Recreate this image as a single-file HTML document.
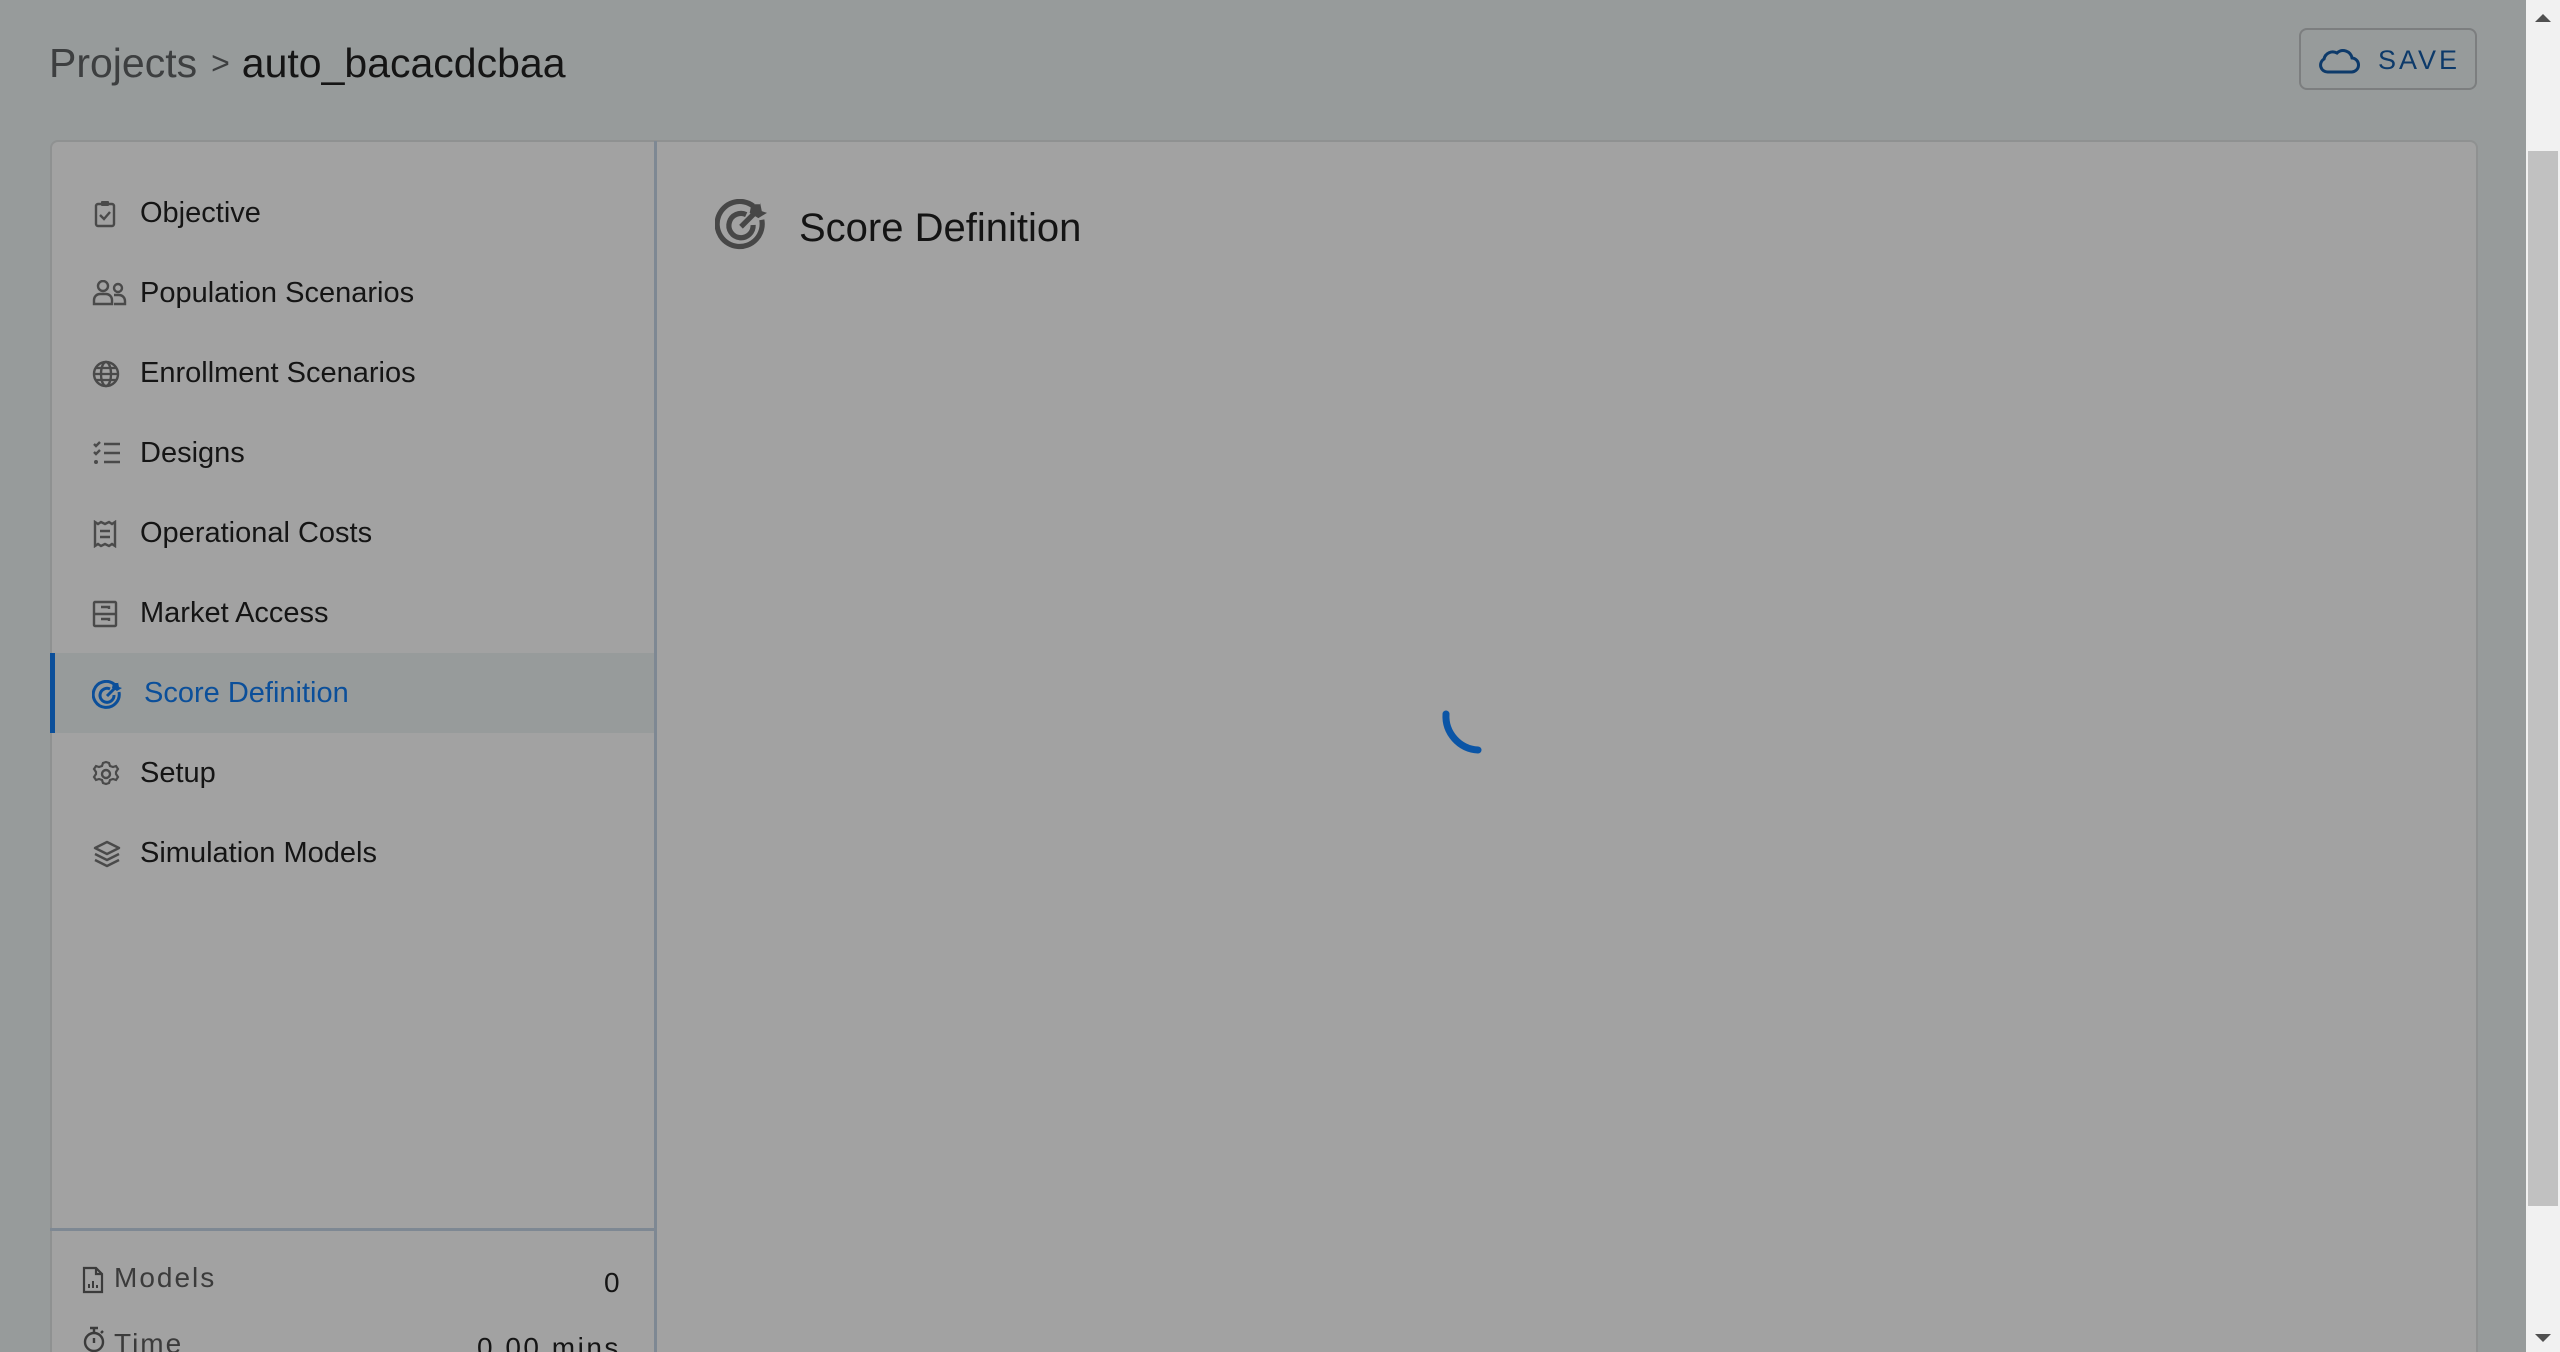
<!DOCTYPE html>
<html><head><meta charset="utf-8"><style>
*{box-sizing:border-box;margin:0;padding:0}
html,body{width:2560px;height:1352px;overflow:hidden}
body{background:#979b9b;font-family:"Liberation Sans",sans-serif;position:relative}
.crumb{position:absolute;left:49px;top:40px;font-size:41px;white-space:nowrap}
.crumb .p{color:#3d3f40}
.crumb .sep{color:#3d3f40;font-size:32px;margin:0 12px 0 14px;position:relative;top:-3px}
.crumb .a{color:#151515}
.save{position:absolute;left:2299px;top:28px;width:178px;height:62px;border:2px solid #7c7e7f;border-radius:8px}
.save svg{position:absolute;left:17px;top:15px}
.save span{position:absolute;left:77px;top:15px;font-size:27px;letter-spacing:3px;color:#0d3a6a}
.sb{position:absolute;left:2526px;top:0;width:34px;height:1352px;background:#f1f1f1}
.thumb{position:absolute;left:2528px;top:151px;width:30px;height:1055px;background:#c1c1c1}
.panel{position:absolute;left:50px;top:140px;width:2428px;height:1240px;background:#a2a2a2;border:2px solid #8f9191;border-radius:8px}
.side{position:absolute;left:50px;top:141px;width:607px;height:1211px;border-right:3px solid #7e8893}
.item{position:absolute;left:0;width:604px;height:80px;font-size:29px;color:#151515}
.item svg{position:absolute;left:42px;top:27px}
.item span{position:absolute;left:90px;top:24px}
.sel{background:#979b9b;border-left:5px solid #0b4f9a;color:#0b4f9a}
.sel svg{left:37px}.sel span{left:89px}
.div{position:absolute;left:50px;top:1228px;width:605px;height:3px;background:#7e8893}
.foot{position:absolute;left:82px;font-size:28px;color:#3b3b3b;letter-spacing:2px}
</style></head><body>
<div class="crumb"><span class="p">Projects</span><span class="sep">&gt;</span><span class="a">auto_bacacdcbaa</span></div>
<div class="save"><svg width="42" height="30" viewBox="0 0 42 30"><path d="M10 27 H33 A7 7 0 0 0 34 13 A9 9 0 0 0 19 8 A9 9 0 0 0 6 14 A7 7 0 0 0 10 27 Z" fill="none" stroke="#0d3a6a" stroke-width="3"/></svg><span>SAVE</span></div>
<div class="sb"><svg width="34" height="20" style="position:absolute;top:8px;left:0"><path d="M9 14 L17 6 L25 14 Z" fill="#505050"/></svg><svg width="34" height="20" style="position:absolute;top:1328px;left:0"><path d="M9 6 L17 14 L25 6 Z" fill="#505050"/></svg></div>
<div class="thumb"></div>
<div class="panel"></div>
<div class="side">
<div class="item" style="top:32px"><svg width="26" height="28" viewBox="0 0 26 28"><rect x="4" y="4" width="18" height="22" rx="2" fill="none" stroke="#4a4a4a" stroke-width="2.4"/><rect x="9" y="1" width="8" height="5" rx="1" fill="#4a4a4a"/><path d="M8 15 l4 4 l6 -7" fill="none" stroke="#4a4a4a" stroke-width="2.4"/></svg><span>Objective</span></div>
<div class="item" style="top:112px"><svg width="36" height="26" viewBox="0 0 36 26"><circle cx="11" cy="6" r="5" fill="none" stroke="#4a4a4a" stroke-width="2.4"/><circle cx="26" cy="8" r="4" fill="none" stroke="#4a4a4a" stroke-width="2.4"/><path d="M2 24 v-4 a6 6 0 0 1 6 -6 h6 a6 6 0 0 1 6 6 v4 z M22 15 h5 a6 6 0 0 1 6 6 v3 h-11" fill="none" stroke="#4a4a4a" stroke-width="2.4"/></svg><span>Population Scenarios</span></div>
<div class="item" style="top:192px"><svg width="28" height="28" viewBox="0 0 28 28"><circle cx="14" cy="14" r="12" fill="none" stroke="#4a4a4a" stroke-width="2.4"/><ellipse cx="14" cy="14" rx="5" ry="12" fill="none" stroke="#4a4a4a" stroke-width="2.4"/><path d="M2 14 h24 M4 8 h20 M4 20 h20" stroke="#4a4a4a" stroke-width="2.2"/></svg><span>Enrollment Scenarios</span></div>
<div class="item" style="top:272px"><svg width="30" height="26" viewBox="0 0 30 26"><path d="M2 4 l2 2 l4 -4 M2 12 l2 2 l4 -4 M12 4 h16 M12 13 h16 M12 22 h16" fill="none" stroke="#4a4a4a" stroke-width="2.4"/><circle cx="4" cy="22" r="2" fill="#4a4a4a"/></svg><span>Designs</span></div>
<div class="item" style="top:352px"><svg width="26" height="28" viewBox="0 0 26 28"><path d="M3 2 l3 2 l3 -2 l4 2 l4 -2 l3 2 l3 -2 v24 l-3 -2 l-3 2 l-4 -2 l-4 2 l-3 -2 l-3 2 z M8 11 h10 M8 17 h10" fill="none" stroke="#4a4a4a" stroke-width="2.4"/></svg><span>Operational Costs</span></div>
<div class="item" style="top:432px"><svg width="26" height="28" viewBox="0 0 26 28"><rect x="2" y="2" width="22" height="24" rx="1" fill="none" stroke="#4a4a4a" stroke-width="2.4"/><path d="M2 14 h22 M9 7 h8 v2 M9 19 h8 v2" fill="none" stroke="#4a4a4a" stroke-width="2.4"/></svg><span>Market Access</span></div>
<div class="item sel" style="top:512px"><svg width="30" height="30" viewBox="0 0 30 30"><path d="M22 4 A13 13 0 1 0 27 12" fill="none" stroke="#0b4f9a" stroke-width="3"/><path d="M18 9 A7 7 0 1 0 22 15" fill="none" stroke="#0b4f9a" stroke-width="3"/><path d="M15 16 L24 7" stroke="#0b4f9a" stroke-width="3"/><path d="M21 3 l5 0 0 -1 l1 5 l3 1 -5 3 -5 -3z" fill="#0b4f9a"/></svg><span>Score Definition</span></div>
<div class="item" style="top:592px"><svg width="28" height="28" viewBox="0 0 28 28"><path d="M14 2 l3 1 1 3 3 1 3 -1 2 3 -2 3 v2 l2 3 -2 3 -3 -1 -3 1 -1 3 -3 1 -3 -1 -1 -3 -3 -1 -3 1 -2 -3 2 -3 v-2 l-2 -3 2 -3 3 1 3 -1 1 -3 z" fill="none" stroke="#4a4a4a" stroke-width="2.2"/><circle cx="14" cy="14" r="4" fill="none" stroke="#4a4a4a" stroke-width="2.4"/></svg><span>Setup</span></div>
<div class="item" style="top:672px"><svg width="30" height="30" viewBox="0 0 30 30"><path d="M15 2 L27 8 L15 14 L3 8 Z M3 14 L15 20 L27 14 M3 20 L15 26 L27 20" fill="none" stroke="#4a4a4a" stroke-width="2.4" stroke-linejoin="round"/></svg><span>Simulation Models</span></div>
</div>
<div class="div"></div>
<svg style="position:absolute;left:82px;top:1266px" width="22" height="28" viewBox="0 0 22 28"><path d="M2 2 h12 l6 6 v18 h-18 z M14 2 v6 h6" fill="none" stroke="#3b3b3b" stroke-width="2.2"/><path d="M7 22 v-4 M11 22 v-7 M15 22 v-3" stroke="#3b3b3b" stroke-width="2"/></svg>
<div class="foot" style="top:1262px;left:114px">Models</div>
<div style="position:absolute;top:1267px;left:604px;font-size:28px;color:#151515">0</div>
<svg style="position:absolute;left:82px;top:1326px" width="24" height="28" viewBox="0 0 24 28"><circle cx="12" cy="16" r="9" fill="none" stroke="#3b3b3b" stroke-width="2.4"/><path d="M8 2 h8 M12 2 v5 M12 12 v5 M19 7 l2 -2" stroke="#3b3b3b" stroke-width="2.4"/></svg>
<div class="foot" style="top:1328px;left:114px">Time</div>
<div style="position:absolute;top:1332px;left:477px;font-size:28px;color:#151515;letter-spacing:2.5px">0.00 mins</div>
<svg style="position:absolute;left:715px;top:199px" width="52" height="52" viewBox="0 0 30 30"><path d="M22 4 A13 13 0 1 0 27 12" fill="none" stroke="#474747" stroke-width="3"/><path d="M18 9 A7 7 0 1 0 22 15" fill="none" stroke="#474747" stroke-width="3"/><path d="M15 16 L24 7" stroke="#474747" stroke-width="3"/><path d="M21 3 l5 0 0 -1 l1 5 l3 1 -5 3 -5 -3z" fill="#474747"/></svg>
<div style="position:absolute;left:799px;top:206px;font-size:40px;color:#141414">Score Definition</div>
<svg style="position:absolute;left:1430px;top:670px" width="100" height="100"><path d="M16 44 A34 34 0 0 0 48 80" fill="none" stroke="#0b55a6" stroke-width="7" stroke-linecap="round"/></svg>
</body></html>
